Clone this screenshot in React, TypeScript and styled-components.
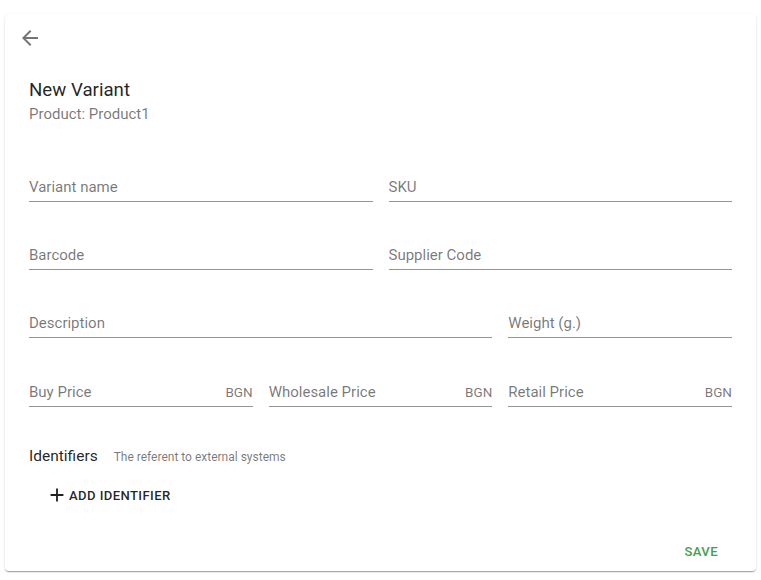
import React from 'react';
import styled, { createGlobalStyle } from 'styled-components';

const GlobalStyle = createGlobalStyle`
  html, body {
    margin: 0;
    padding: 0;
    background: #ffffff;
    font-family: Roboto, "Liberation Sans", Arial, sans-serif;
    -webkit-font-smoothing: antialiased;
  }
`;

const Page = styled.div`
  padding: 14px 5px 9px 5px;
`;

const Card = styled.div`
  background: #fff;
  border-radius: 4px;
  box-shadow: 0px 2px 1px -1px rgba(0, 0, 0, 0.2), 0px 1px 1px 0px rgba(0, 0, 0, 0.14),
    0px 1px 3px 0px rgba(0, 0, 0, 0.12);
  padding: 12px 24px 2px 24px;
  display: flex;
  flex-direction: column;
`;

const BackButton = styled.button`
  width: 24px;
  height: 24px;
  margin-left: -11px;
  padding: 0;
  border: none;
  background: transparent;
  color: rgba(0, 0, 0, 0.54);
  cursor: pointer;
  display: flex;
`;

const Heading = styled.div`
  margin-top: 28px;
  display: flex;
  flex-direction: column;
`;

const Title = styled.div`
  font-size: 18.7px;
  line-height: 24px;
  color: rgba(0, 0, 0, 0.87);
`;

const Subtitle = styled.div`
  margin-top: 2px;
  font-size: 15px;
  line-height: 20px;
  color: rgba(0, 0, 0, 0.54);
`;

const Form = styled.div`
  margin-top: 30px;
  display: grid;
  grid-template-columns: repeat(6, 1fr);
  column-gap: 16px;
  row-gap: 20px;
`;

const Field = styled.div<{ span: number; gap?: number }>`
  grid-column: span ${p => p.span};
  margin-top: ${p => p.gap || 0}px;
  height: 48px;
  box-sizing: border-box;
  border-bottom: 1px solid rgba(0, 0, 0, 0.42);
  padding-bottom: 6px;
  display: flex;
  align-items: flex-end;
  justify-content: space-between;
`;

const Label = styled.span`
  font-size: 15px;
  line-height: 16px;
  color: rgba(0, 0, 0, 0.54);
`;

const Adornment = styled.span`
  font-size: 13.5px;
  line-height: 16px;
  color: rgba(0, 0, 0, 0.54);
`;

const Section = styled.div`
  margin-top: 37px;
  display: flex;
  align-items: baseline;
  gap: 16px;
`;

const SectionTitle = styled.span`
  font-size: 15.5px;
  line-height: 24px;
  color: rgba(0, 0, 0, 0.87);
`;

const SectionHint = styled.span`
  font-size: 12px;
  color: rgba(0, 0, 0, 0.54);
`;

const TextButton = styled.button<{ color?: string }>`
  height: 36px;
  padding: 0 8px;
  border: none;
  background: transparent;
  display: inline-flex;
  align-items: center;
  gap: 1px;
  font-family: inherit;
  font-size: 13.1px;
  font-weight: 500;
  letter-spacing: 0.4px;
  text-transform: uppercase;
  color: ${p => p.color || 'rgba(0, 0, 0, 0.87)'};
  cursor: pointer;
`;

const AddRow = styled.div`
  margin-top: 9px;
  padding-left: 13px;
  display: flex;
`;

const Actions = styled.div`
  margin-top: 20px;
  display: flex;
  justify-content: flex-end;
  padding-right: 6px;
`;

const ArrowBack = () => (
  <svg width="24" height="24" viewBox="0 0 24 24" fill="currentColor">
    <path d="M20 11H7.83l5.59-5.59L12 4l-8 8 8 8 1.41-1.41L7.83 13H20v-2z" />
  </svg>
);

const AddIcon = () => (
  <svg width="22" height="22" viewBox="0 0 24 24" fill="currentColor" style={{ marginLeft: -4 }}>
    <path d="M19 13h-6v6h-2v-6H5v-2h6V5h2v6h6v2z" />
  </svg>
);

const fields = [
  { label: 'Variant name', span: 3 },
  { label: 'SKU', span: 3 },
  { label: 'Barcode', span: 3 },
  { label: 'Supplier Code', span: 3 },
  { label: 'Description', span: 4 },
  { label: 'Weight (g.)', span: 2 },
  { label: 'Buy Price', span: 2, unit: 'BGN', gap: 1 },
  { label: 'Wholesale Price', span: 2, unit: 'BGN', gap: 1 },
  { label: 'Retail Price', span: 2, unit: 'BGN', gap: 1 }
];

const App: React.FC = () => {
  return (
    <Page>
      <GlobalStyle />
      <Card>
        <BackButton aria-label="back">
          <ArrowBack />
        </BackButton>
        <Heading>
          <Title>New Variant</Title>
          <Subtitle>Product: Product1</Subtitle>
        </Heading>
        <Form>
          {fields.map(f => (
            <Field key={f.label} span={f.span} gap={f.gap}>
              <Label>{f.label}</Label>
              {f.unit && <Adornment>{f.unit}</Adornment>}
            </Field>
          ))}
        </Form>
        <Section>
          <SectionTitle>Identifiers</SectionTitle>
          <SectionHint>The referent to external systems</SectionHint>
        </Section>
        <AddRow>
          <TextButton>
            <AddIcon />
            Add identifier
          </TextButton>
        </AddRow>
        <Actions>
          <TextButton color="#43a047">Save</TextButton>
        </Actions>
      </Card>
    </Page>
  );
};

export default App;
